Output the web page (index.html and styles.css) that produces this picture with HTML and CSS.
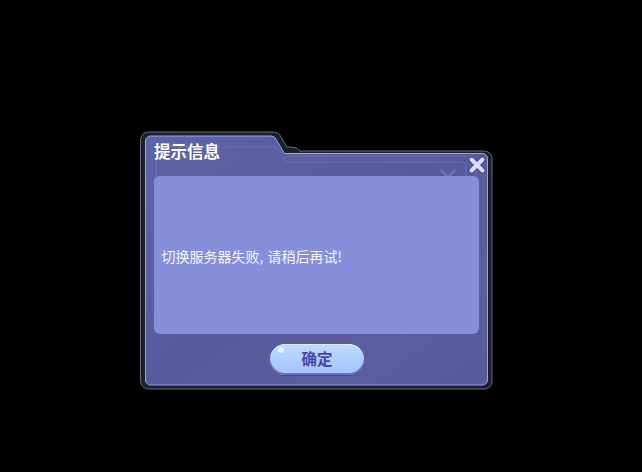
FILE: index.html
```html
<!DOCTYPE html>
<html lang="zh">
<head>
<meta charset="utf-8">
<title>提示信息</title>
<link rel="stylesheet" href="styles.css">
</head>
<body>
<div class="dialog">
  <svg class="frame" width="353" height="259" viewBox="0 0 353 259" aria-hidden="true">
    <defs>
      <linearGradient id="body" x1="0" y1="0" x2="1" y2="1">
        <stop offset="0" stop-color="#5f63a6"/>
        <stop offset="0.5" stop-color="#575b9b"/>
        <stop offset="0.78" stop-color="#5b5fa0"/>
        <stop offset="1" stop-color="#565a99"/>
      </linearGradient>
    </defs>
    <path d="M0.500 9a8 8 0 0 1 8-8H133a9 9 0 0 1 8.500 6L147 16h4q6 0 9 4h184.500a7.500 7.500 0 0 1 7.500 7.500V250.500a7.500 7.500 0 0 1-7.500 7.500H8.500a8 8 0 0 1-8-8Z" fill="#1c202c" stroke="#666a78"/>
    <path d="M5.500 10a5 5 0 0 1 5-5H131a6 6 0 0 1 5.500 4L144.500 22.500H342.500a5 5 0 0 1 5 5V249a5 5 0 0 1-5 5H10.500a5 5 0 0 1-5-5Z" fill="url(#body)" stroke="#97a4ee"/>
    <path d="M16.500 46V20a4 4 0 0 1 4-4H134a6 6 0 0 1 5 3L147 31H322a4 4 0 0 1 4 4V46" fill="none" stroke="#6b70b3"/>
    <path d="M12 16H130M10 24V46" fill="none" stroke="#6469ac"/>
    <path d="M150 25H330a6 6 0 0 1 6 6V46" fill="none" stroke="#6a6fb2"/>
    <path d="M302 40l6 6 6-6" fill="none" stroke="#6d72b6" stroke-width="3" stroke-linecap="round"/>
  </svg>
  <h1 class="title">提示信息</h1>
  <button class="close" type="button" aria-label="关闭">
    <svg width="20" height="20" viewBox="0 0 20 20" aria-hidden="true">
      <path d="M4.500 4.500L15.500 15.500M15.500 4.500L4.500 15.500" stroke="#4a4c92" stroke-width="6.500" stroke-linecap="round"/>
      <path d="M4.500 4.500L15.500 15.500M15.500 4.500L4.500 15.500" stroke="#dcdcfa" stroke-width="4" stroke-linecap="round"/>
    </svg>
  </button>
  <div class="content">
    <p class="message">切换服务器失败, 请稍后再试!</p>
  </div>
  <div class="footer">
    <button class="confirm" type="button">确定</button>
  </div>
</div>
</body>
</html>
```
FILE: styles.css
```css
html, body {
  margin: 0;
  padding: 0;
  height: 100%;
  background: #000;
}

body {
  padding: 131px 0 0 140px;
  box-sizing: border-box;
  overflow: hidden;
  font-family: "Noto Sans CJK SC", "Liberation Sans", sans-serif;
}

.dialog {
  position: relative;
  width: 353px;
  height: 259px;
  padding: 8px 14px 0 14px;
  box-sizing: border-box;
}

.frame {
  position: absolute;
  left: 0;
  top: 0;
}

.title {
  position: relative;
  margin: 0;
  height: 37px;
  font-size: 16.5px;
  line-height: 24px;
  font-weight: 700;
  color: #fff;
}

.close {
  position: absolute;
  left: 327px;
  top: 24px;
  width: 20px;
  height: 20px;
  padding: 0;
  border: 0;
  background: none;
  line-height: 0;
}

.content {
  position: relative;
  height: 158px;
  background: #878fda;
  border-radius: 6px;
  display: flex;
  align-items: center;
  padding: 2px 8px 0 7.5px;
  box-sizing: border-box;
}

.message {
  margin: 0;
  font-size: 14px;
  line-height: 20px;
  word-spacing: 1px;
  color: #f4f5ff;
  position: relative;
}

.footer {
  position: relative;
  display: flex;
  justify-content: center;
  padding: 10px 0 0 1px;
}

.confirm {
  position: relative;
  width: 94px;
  height: 31px;
  padding: 0 0 3px;
  border: 0;
  border-radius: 16px;
  background: linear-gradient(180deg, #c3dafd 0%, #aecefd 50%, #a8c6fc 85%, #b4ccfc 100%);
  box-shadow: inset 0 -2px 0 #6a6fc4, inset 0 1px 0 #dfeaff, 0 1px 0 #44478a;
  font-family: inherit;
  font-size: 15.5px;
  font-weight: 700;
  line-height: 22px;
  color: #4a46a6;
}

.confirm::before {
  content: "";
  position: absolute;
  left: 8px;
  top: 3px;
  width: 6px;
  height: 6px;
  border-radius: 50%;
  background: #e8f2ff;
}
```
